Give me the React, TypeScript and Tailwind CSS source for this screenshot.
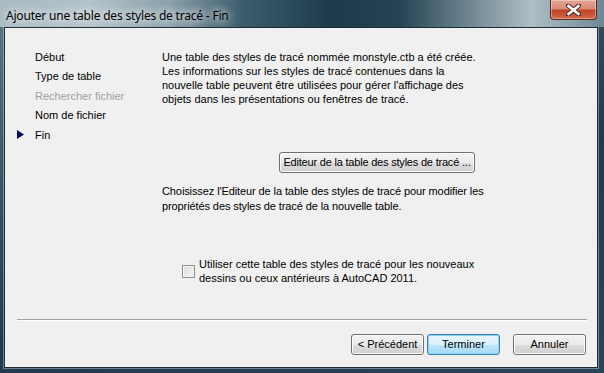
import React from "react";

const steps = [
  { label: "Début", state: "done" },
  { label: "Type de table", state: "done" },
  { label: "Rechercher fichier", state: "disabled" },
  { label: "Nom de fichier", state: "done" },
  { label: "Fin", state: "current" },
];

const WinButton = ({ label, primary = false, className = "" }: { label: string; primary?: boolean; className?: string }) => (
  <button
    className={
      "h-[21px] rounded-[3px] border text-[11px] text-black leading-none whitespace-nowrap " +
      (primary
        ? "border-[#3c7fb1] bg-[linear-gradient(to_bottom,#eaf6fd_0%,#d9f0fc_50%,#bee6fd_51%,#a7d9f5_100%)] shadow-[inset_0_0_0_1px_#8fd1f3] "
        : "border-[#707070] bg-[linear-gradient(to_bottom,#f2f2f2_0%,#ebebeb_50%,#dddddd_51%,#cfcfcf_100%)] shadow-[inset_0_0_0_1px_#fcfcfc] ") +
      className
    }
  >
    {label}
  </button>
);

export default function App() {
  return (
    <div className="w-[604px] h-[373px] flex flex-col bg-[linear-gradient(160deg,#5d7887_0%,#3a5666_30%,#1f3a4a_60%,#2a4656_100%)] font-['Liberation_Sans',Arial,sans-serif] overflow-hidden">
      {/* title bar */}
      <div className="relative h-[27px] shrink-0 flex items-center bg-[linear-gradient(to_right,#a9bac2_0%,#b3c2c9_15%,#8ba1ac_28%,#3d5d6d_40%,#1c3a4a_55%,#244353_66%,#7d939e_80%,#b0bec5_88%,#6e8895_100%)]">
        <span className="ml-[6px] mt-[5px] text-[12px] text-black font-['Noto_Sans',sans-serif] tracking-[-0.2px] [text-shadow:0_0_8px_#ffffff,0_0_12px_#ffffff]">
          Ajouter une table des styles de tracé - Fin
        </span>
        <div className="absolute left-[550px] top-0 w-[47px] h-[20px] rounded-b-[4px] border border-t-0 border-[#5a2a22] bg-[linear-gradient(to_bottom,#e8a493_0%,#d98b79_45%,#c24425_55%,#d26a4a_100%)] shadow-[inset_0_0_0_1px_rgba(255,255,255,0.35)] flex items-center justify-center">
          <svg width="15" height="12" viewBox="0 0 15 12">
            <path d="M2 1.5 L13 10.5 M13 1.5 L2 10.5" stroke="#4a2a24" strokeWidth="4.5" strokeLinecap="square" />
            <path d="M2.5 2 L12.5 10 M12.5 2 L2.5 10" stroke="#ffffff" strokeWidth="2.6" strokeLinecap="square" />
          </svg>
        </div>
      </div>

      {/* client area */}
      <div className="ml-[4px] mr-[6px] mb-[5px] flex-1 flex flex-col border border-[#1d2b34] bg-[#f0f0f0] shadow-[0_0_0_1px_rgba(255,255,255,0.35)] text-[11px] text-black">
        <div className="h-[291px] flex pt-[19px]">
          {/* steps */}
          <div className="w-[157px] flex flex-col">
            {steps.map((s) => (
              <div key={s.label} className="h-[19.5px] flex items-center relative">
                {s.state === "current" && (
                  <svg className="absolute left-[12px]" width="7" height="9" viewBox="0 0 7 9">
                    <path d="M0 0 L7 4.5 L0 9 Z" fill="#0a0a6e" />
                  </svg>
                )}
                <span className={"ml-[30px] " + (s.state === "disabled" ? "text-[#a0a0a0]" : "")}>{s.label}</span>
              </div>
            ))}
          </div>
          {/* content */}
          <div className="flex-1 flex flex-col pt-[3px]">
            <p className="leading-[14px]">
              Une table des styles de tracé nommée monstyle.ctb a été créée.
              <br />
              Les informations sur les styles de tracé contenues dans la
              <br />
              nouvelle table peuvent être utilisées pour gérer l'affichage des
              <br />
              objets dans les présentations ou fenêtres de tracé.
            </p>
            <div className="mt-[46px] ml-[117px]">
              <WinButton label="Editeur de la table des styles de tracé ..." className="w-[196px] tracking-[-0.2px]" />
            </div>
            <p className="mt-[11px] leading-[15px] tracking-[-0.1px]">
              Choisissez l'Editeur de la table des styles de tracé pour modifier les
              <br />
              propriétés des styles de tracé de la nouvelle table.
            </p>
            <div className="mt-[43px] ml-[20px] flex items-start">
              <div className="mt-[8px] w-[13px] h-[13px] border border-[#8e8f8f] bg-[linear-gradient(135deg,#dcdcdc_0%,#f5f5f5_100%)] shadow-[inset_0_0_0_1px_#f4f4f4]" />
              <p className="ml-[4px] leading-[14px]">
                Utiliser cette table des styles de tracé pour les nouveaux
                <br />
                dessins ou ceux antérieurs à AutoCAD 2011.
              </p>
            </div>
          </div>
        </div>

        {/* separator */}
        <div className="ml-[12px] mr-[10px] h-[2px] border-t border-[#a0a0a0] border-b border-b-white" />

        {/* buttons */}
        <div className="mt-[13px] flex justify-end pr-[11px]">
          <WinButton label="< Précédent" className="w-[73px]" />
          <WinButton label="Terminer" primary className="w-[73px] ml-[3px]" />
          <WinButton label="Annuler" className="w-[73px] ml-[13px]" />
        </div>
      </div>
    </div>
  );
}
